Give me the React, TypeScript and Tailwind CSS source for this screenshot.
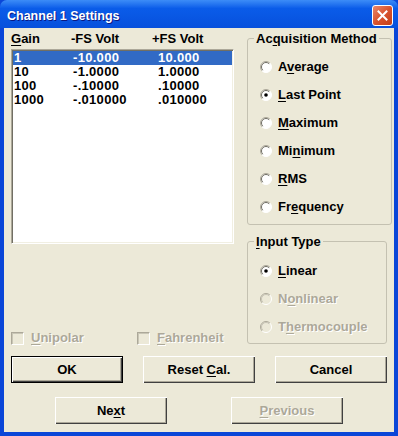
import React from "react";

const U = ({ children }: { children: React.ReactNode }) => (
  <span className="underline decoration-1 underline-offset-[2px]">{children}</span>
);

const Radio = ({
  checked,
  disabled,
  children,
}: {
  checked?: boolean;
  disabled?: boolean;
  children: React.ReactNode;
}) => (
  <div
    className={`flex items-center h-[28px] gap-[6px] whitespace-nowrap ${
      disabled ? "text-[#ACA899] [text-shadow:1px_1px_0_#fff]" : "text-black"
    }`}
  >
    <svg width="12" height="12" viewBox="0 0 12 12" className="shrink-0">
      <circle cx="6" cy="6" r="5.5" fill={disabled ? "#ECE9D8" : "#fff"} />
      <path d="M2.1 9.9 A5.5 5.5 0 0 1 9.9 2.1" stroke="#ACA899" fill="none" />
      <path d="M2.8 9.2 A4.5 4.5 0 0 1 9.2 2.8" stroke={disabled ? "#C6C3B5" : "#716F64"} fill="none" />
      <path d="M9.9 2.1 A5.5 5.5 0 0 1 2.1 9.9" stroke="#fff" fill="none" />
      {checked && <circle cx="6" cy="6" r="1.8" fill="#000" />}
    </svg>
    <span>{children}</span>
  </div>
);

const Check = ({ children }: { children: React.ReactNode }) => (
  <div className="flex items-center gap-[7px] whitespace-nowrap text-[#ACA899] [text-shadow:1px_1px_0_#fff]">
    <span className="w-[13px] h-[13px] shrink-0 bg-[#ECE9D8] border border-t-[#ACA899] border-l-[#ACA899] border-r-white border-b-white shadow-[inset_1px_1px_0_#C9C6B6]" />
    <span>{children}</span>
  </div>
);

const Btn = ({
  children,
  def,
  disabled,
}: {
  children: React.ReactNode;
  def?: boolean;
  disabled?: boolean;
}) => (
  <button
    className={`w-[112px] h-[27px] flex items-center justify-center bg-[#ECE9D8] font-bold ${
      def
        ? "border border-black shadow-[inset_1px_1px_0_#fff,inset_-1px_-1px_0_#404040,inset_-2px_-2px_0_#ACA899]"
        : "shadow-[inset_1px_1px_0_#fff,inset_-1px_-1px_0_#404040,inset_-2px_-2px_0_#ACA899]"
    } ${disabled ? "text-[#ACA899] [text-shadow:1px_1px_0_#fff]" : "text-black"}`}
  >
    <span className="whitespace-pre">{children}</span>
  </button>
);

const rows = [
  ["1", "-10.000", "10.000"],
  ["10", "-1.0000", "1.0000"],
  ["100", "-.10000", ".10000"],
  ["1000", "-.010000", ".010000"],
];

const App = () => {
  return (
    <div className="w-[398px] h-[436px] bg-[#0A46D8] flex flex-col font-['Liberation_Sans',Arial,sans-serif] font-bold text-[13px] leading-[14px] select-none">
      <div className="h-[28px] shrink-0 flex items-center pl-[7px] pr-[5px] rounded-t-[7px] bg-gradient-to-b from-[#3C8CF7] via-[#0A5CE9] via-30% to-[#0750DC]">
        <span className="flex-1 pt-[3px] text-white text-[12.5px] [text-shadow:1px_1px_0_#0A1883]">
          Channel 1 Settings
        </span>
        <div className="mt-[2px] w-[21px] h-[21px] rounded-[3px] border border-white bg-gradient-to-br from-[#E9876A] via-[#D9532E] to-[#C23F17] flex items-center justify-center">
          <svg width="11" height="11" viewBox="0 0 11 11">
            <path d="M1.5 1.5 L9.5 9.5 M9.5 1.5 L1.5 9.5" stroke="#fff" strokeWidth="2" strokeLinecap="square" />
          </svg>
        </div>
      </div>

      <div className="flex-1 mx-[4px] mb-[4px] bg-[#ECE9D8] flex flex-col px-[7px] pt-[3px] pb-[8px]">
        <div className="flex gap-[13px] h-[315px]">
          <div className="w-[223px] flex flex-col justify-between">
            <div>
              <div className="h-[16px] grid grid-cols-[60px_81px_1fr] items-center">
                <span>
                  <U>G</U>ain
                </span>
                <span>-FS Volt</span>
                <span>+FS Volt</span>
              </div>
              <div className="mt-[2px] h-[195px] bg-white border border-t-[#ACA899] border-l-[#ACA899] border-r-white border-b-white shadow-[inset_1px_1px_0_#716F64,inset_-1px_-1px_0_#F1EFE2] p-[1px]">
                {rows.map((r, i) => (
                  <div
                    key={r[0]}
                    className={`h-[14px] grid grid-cols-[59px_85px_1fr] items-center pl-[1px] tracking-[0.3px] ${
                      i === 0 ? "bg-[#316AC5] text-white" : "text-black"
                    }`}
                  >
                    <span>{r[0]}</span>
                    <span>{r[1]}</span>
                    <span>{r[2]}</span>
                  </div>
                ))}
              </div>
            </div>
            <div className="h-[16px] flex items-center">
              <div className="w-[126px]">
                <Check>
                  <U>U</U>nipolar
                </Check>
              </div>
              <Check>
                <U>F</U>ahrenheit
              </Check>
            </div>
          </div>

          <div className="w-[140px] flex flex-col">
            <fieldset className="border border-[#C4C1B1] rounded-[3px] px-[12px] pt-[7px] pb-[3px]">
              <legend className="ml-[-6px] px-[2px] leading-[15px] whitespace-nowrap">
                Ac<U>q</U>uisition Method
              </legend>
              <Radio>
                A<U>v</U>erage
              </Radio>
              <Radio checked>
                <U>L</U>ast Point
              </Radio>
              <Radio>
                <U>M</U>aximum
              </Radio>
              <Radio>
                Mi<U>n</U>imum
              </Radio>
              <Radio>
                <U>R</U>MS
              </Radio>
              <Radio>
                Fr<U>e</U>quency
              </Radio>
            </fieldset>
            <fieldset className="mt-[9px] border border-[#C4C1B1] rounded-[3px] px-[12px] pt-[8px] pb-[2px]">
              <legend className="ml-[-6px] px-[2px] leading-[15px] whitespace-nowrap">
                <U>I</U>nput Type
              </legend>
              <Radio checked>
                <U>L</U>inear
              </Radio>
              <Radio disabled>
                N<U>o</U>nlinear
              </Radio>
              <Radio disabled>
                T<U>h</U>ermocouple
              </Radio>
            </fieldset>
          </div>
        </div>

        <div className="flex gap-[20px] mt-[10px]">
          <Btn def>OK</Btn>
          <Btn>
            Reset <U>C</U>al.
          </Btn>
          <Btn>Cancel</Btn>
        </div>
        <div className="flex justify-center gap-[64px] mt-[14px]">
          <Btn>
            Ne<U>x</U>t
          </Btn>
          <Btn disabled>
            <U>P</U>revious
          </Btn>
        </div>
      </div>
    </div>
  );
};

export default App;
